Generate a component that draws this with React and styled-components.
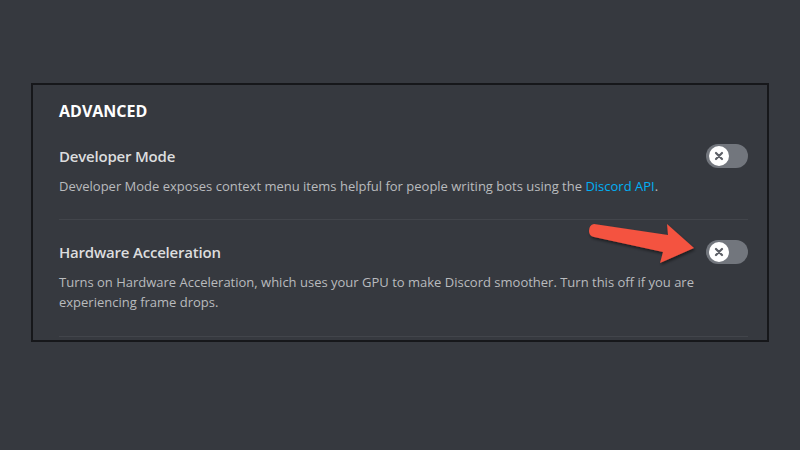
import React from "react";
import styled, { createGlobalStyle } from "styled-components";

const GlobalStyle = createGlobalStyle`
  html, body {
    margin: 0;
    padding: 0;
    background: #36393f;
  }
  body {
    font-family: "Open Sans", "Noto Sans", sans-serif;
  }
`;

const Page = styled.div`
  width: 800px;
  height: 450px;
  box-sizing: border-box;
  padding: 83px 31px 0;
  background: #36393f;
`;

const Panel = styled.section`
  position: relative;
  box-sizing: border-box;
  width: 738px;
  height: 259px;
  border: 2px solid #16171a;
  background: #36393f;
  padding: 16px 19px 0 26px;
`;

const Heading = styled.h2`
  margin: 0;
  font-size: 16px;
  line-height: 20px;
  font-weight: 700;
  color: #ffffff;
`;

const Setting = styled.div`
  padding-top: ${(p) => p.$top}px;
`;

const TitleRow = styled.div`
  display: flex;
  align-items: center;
  justify-content: space-between;
  height: 20px;
`;

const Title = styled.div`
  font-size: 15px;
  line-height: 20px;
  font-weight: 600;
  letter-spacing: -0.2px;
  color: #dcddde;
`;

const Description = styled.p`
  margin: 10px 0 0;
  max-width: 650px;
  font-size: 13px;
  line-height: 20px;
  color: #b9bbbe;
`;

const Link = styled.a`
  color: #00b0f4;
  text-decoration: none;
`;

const Divider = styled.div`
  height: 1px;
  background: #42454b;
  margin-top: ${(p) => p.$top}px;
`;

const Track = styled.div`
  width: 42px;
  height: 24px;
  border-radius: 12px;
  background: #72767d;
  display: flex;
  align-items: center;
  padding-left: 3px;
  box-sizing: border-box;
`;

const Knob = styled.div`
  width: 20px;
  height: 20px;
  border-radius: 50%;
  background: #ffffff;
  display: flex;
  align-items: center;
  justify-content: center;
`;

const Arrow = styled.svg`
  position: absolute;
  left: 555px;
  top: 136px;
  width: 120px;
  height: 50px;
  overflow: visible;
`;

const Toggle = () => (
  <Track>
    <Knob>
      <svg width="10" height="10" viewBox="0 0 10 10">
        <path
          d="M2 2 L8 8 M8 2 L2 8"
          stroke="#5d6067"
          strokeWidth="2.2"
          strokeLinecap="round"
        />
      </svg>
    </Knob>
  </Track>
);

const App = () => {
  return (
    <>
      <GlobalStyle />
      <Page>
        <Panel>
          <Heading>ADVANCED</Heading>
          <Setting $top={25}>
            <TitleRow>
              <Title>Developer Mode</Title>
              <Toggle />
            </TitleRow>
            <Description>
              Developer Mode exposes context menu items helpful for people
              writing bots using the <Link href="#">Discord API</Link>.
            </Description>
          </Setting>
          <Divider $top={23} />
          <Setting $top={22}>
            <TitleRow>
              <Title>Hardware Acceleration</Title>
              <Toggle />
            </TitleRow>
            <Description>
              Turns on Hardware Acceleration, which uses your GPU to make
              Discord smoother. Turn this off if you are experiencing frame
              drops.
            </Description>
          </Setting>
          <Divider $top={24} />
          <Arrow viewBox="0 0 120 50">
            <defs>
              <filter id="sh" x="-20%" y="-40%" width="140%" height="180%">
                <feDropShadow dx="1" dy="2" stdDeviation="1.5" floodColor="#000" floodOpacity="0.5" />
              </filter>
            </defs>
            <path
              d="M6 3 L80 14 L79 3 L106 27 L72 42 L75 31 L6 16 Q1 15 1 10 Q1 4 6 3 Z"
              fill="#f4523f"
              filter="url(#sh)"
            />
          </Arrow>
        </Panel>
      </Page>
    </>
  );
};

export default App;
